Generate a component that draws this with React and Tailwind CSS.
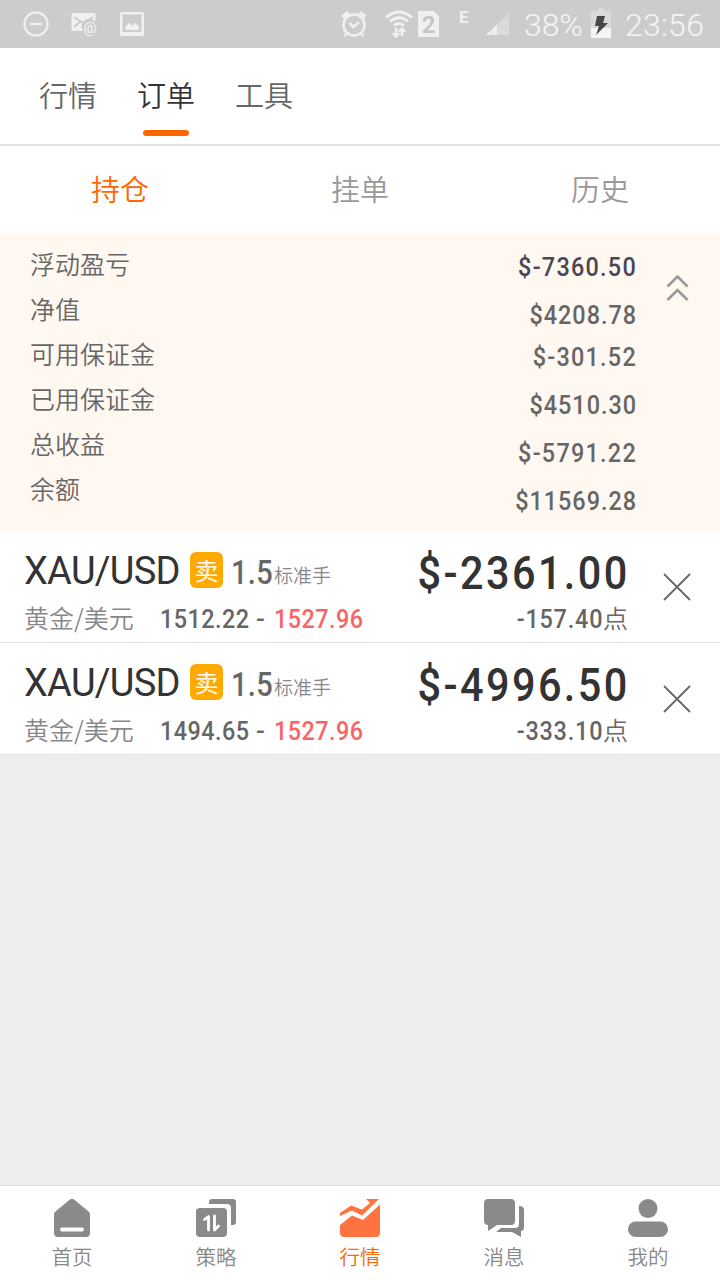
import clsx from 'clsx'

const summary = [
  { label: '浮动盈亏', value: '$-7360.50', cls: 'text-[#4a4755] tracking-[1.4px]' },
  { label: '净值', value: '$4208.78' },
  { label: '可用保证金', value: '$-301.52', cls: '-mt-1.5 tracking-[1.4px]' },
  { label: '已用保证金', value: '$4510.30' },
  { label: '总收益', value: '$-5791.22', cls: 'tracking-[1.4px]' },
  { label: '余额', value: '$11569.28' },
]

const orders = [
  { open: '1512.22', now: '1527.96', profit: '$-2361.00', points: '-157.40' },
  { open: '1494.65', now: '1527.96', profit: '$-4996.50', points: '-333.10' },
]

function StatusBar() {
  return (
    <header className="flex h-12 shrink-0 items-center bg-[#cccccc] text-[#f0f0f0]">
      <svg className="ml-[22px] h-7 w-7" viewBox="0 0 28 28" fill="none" stroke="currentColor" strokeWidth="2.200">
        <circle cx="14" cy="14" r="11.6" />
        <path d="M8 14h12" />
      </svg>
      <svg className="ml-5 h-7 w-7" viewBox="0 0 28 28">
        <path fill="currentColor" d="M3 3h21q1.500 0 1.500 1.500V12a7 7 0 0 0-12.500 9H3q-1.500 0-1.500-1.500v-15Q1.500 3 3 3z" />
        <path d="M4 7l9 6 10-6M4 17l6-5" fill="none" stroke="#cccccc" strokeWidth="2" />
        <text x="13.500" y="22.500" fontSize="14.500" fontFamily="Roboto" fontWeight="500" fill="currentColor">@</text>
      </svg>
      <svg className="ml-5 h-7 w-7" viewBox="0 0 28 28">
        <path fillRule="evenodd" fill="currentColor" d="M4 2h20q2 0 2 2v20q0 2-2 2H4q-2 0-2-2V4q0-2 2-2zM4.500 4.500V22h19V4.500z" />
        <path d="M7.500 20v-3l4-4.500 3 3.500 2.500-3.500 4 4.500v3z" fill="currentColor" />
      </svg>

      <svg className="ml-[194px] h-7 w-7" viewBox="0 0 28 28" fill="none" stroke="currentColor">
        <circle cx="14" cy="15" r="10.500" strokeWidth="2.500" />
        <path d="M2.500 7l6-4.500M25.500 7l-6-4.500" strokeWidth="4" />
        <path d="M9.500 13l4 4 5.500-5M7 23l-2.500 3M21 23l2.500 3" strokeWidth="2.500" />
      </svg>
      <svg className="ml-[17px] h-[30px] w-[30px]" viewBox="0 0 30 30" fill="none" stroke="currentColor" strokeWidth="2.800">
        <path d="M1 8.500Q14-2.500 27 8.500M5 12.500q9-7.500 18 0M9 16.500q5-4 10 0" />
        <path d="M11 19v6M17 27v-6" strokeWidth="2.600" />
        <path d="M6.500 24h9L11 29.500zM12.500 23h9L17 17.500z" fill="currentColor" stroke="none" />
      </svg>
      <svg className="ml-[3px] h-[26px] w-[21px]" viewBox="0 0 21 26">
        <path d="M0 0h16l5 5v21H0z" fill="currentColor" />
        <text x="10.500" y="22" textAnchor="middle" fontSize="24" fontWeight="600" fontFamily="Roboto" fill="#c4c4c4">2</text>
      </svg>
      <span className="mb-3.5 ml-5 w-[9px] font-[Roboto] text-[17px] leading-5 font-bold">E</span>
      <svg className="ml-[18px] h-[22px] w-[23px]" viewBox="0 0 23 22">
        <path d="M23 0v22H0z" fill="#dadada" />
        <path d="M5 17.200v4.800H0zM11 11.500V22H6v-5.700z" fill="currentColor" />
      </svg>
      <span className="ml-[15px] w-[61px] pt-px font-[Roboto] text-[32px] font-[350] tracking-[-0.1px] whitespace-nowrap text-[#f5f5f5]">38%</span>
      <svg className="mb-0.5 ml-[6px] h-[30px] w-5" viewBox="0 0 20 30">
        <path d="M7 0h6v3h7v17H0V3h7z" fill="#dadada" />
        <path d="M0 20h20v10H0z" fill="#f5f5f5" />
        <path d="M6 8h8l-2 7h5L5 27l3-9H4z" fill="#484848" />
      </svg>
      <span className="ml-[14px] pt-px font-[Roboto] text-[32px] font-[350] tracking-[0.3px] text-[#f5f5f5]">23:56</span>
    </header>
  )
}

function Order({ order }) {
  return (
    <div className="flex h-28 border-b border-[#e1e1e6] bg-white text-[#666666]">
      <div className="w-[380px] pl-6">
        <div className="flex h-[72px] items-center pt-1.5">
          <span className="w-[155px] pt-px font-[Roboto] text-[38px] leading-none tracking-[-0.7px] whitespace-nowrap text-[#333333]">XAU/USD</span>
          <span className="ml-[11px] flex h-9 w-[33px] items-center justify-center rounded-md bg-[#ffaa00] text-2xl leading-none text-white">卖</span>
          <span className="ml-2 w-[43px] origin-left scale-x-[0.88] pt-1 font-[Roboto] text-[33px] leading-none font-medium tracking-[0.4px]">1.5</span>
          <span className="pt-2 text-[19px] leading-none font-[350] text-[#888888]">标准手</span>
        </div>
        <div className="flex h-8 items-center whitespace-nowrap">
          <span className="w-[136px] pb-[3px] text-[25px] leading-none font-[350] text-[#888888]">黄金/美元</span>
          <span className="w-[96px] origin-left scale-x-90 font-[Roboto] text-[26px] leading-none font-medium tracking-[0.5px]">{order.open}</span>
          <span className="w-[18px] font-[Roboto] text-[26px] leading-none font-medium">-</span>
          <span className="origin-left scale-x-90 font-[Roboto] text-[26px] leading-none font-medium tracking-[0.5px] text-[#fb6464]">{order.now}</span>
        </div>
      </div>
      <div className="flex w-[248px] flex-col items-end">
        <div className="-mr-0.5 flex h-[72px] origin-right scale-x-90 items-center pt-3 font-[Roboto] text-[46px] leading-none font-medium tracking-[2.7px] text-[#333333]">{order.profit}</div>
        <div className="flex h-8 items-center">
          <span className="origin-right scale-x-90 font-[Roboto] text-[26px] leading-none font-medium tracking-[0.9px]">{order.points}</span>
          <span className="pb-[3px] text-[25px] leading-none font-[350]">点</span>
        </div>
      </div>
      <svg className="mt-[42px] ml-[35px] h-7 w-7" viewBox="0 0 28 28" stroke="#666666" strokeWidth="1.800">
        <path d="M1 1l26 26M27 1L1 27" />
      </svg>
    </div>
  )
}

const nav = [
  {
    label: '首页',
    icon: (
      <>
        <path d="M4 13L18 1.500q2-1.700 4 0L36 13q2 1.500 2 3v19q0 4-4 4H6q-4 0-4-4V16q0-1.500 2-3z" />
        <path d="M10 31.500h20" stroke="#fff" strokeWidth="4" strokeLinecap="round" />
      </>
    ),
  },
  {
    label: '策略',
    icon: (
      <>
        <path d="M13 6V4q0-3 3-3h21q3 0 3 3v20q0 3-3 3h-2V10q0-4-4-4z" />
        <rect y="10" width="31" height="29" rx="4" />
        <path d="M8.500 21.500l4-3V32M18.500 18v14l4-4" fill="none" stroke="#fff" strokeWidth="2.800" strokeLinejoin="round" strokeLinecap="round" />
      </>
    ),
  },
  {
    label: '行情',
    active: true,
    icon: (
      <>
        <path d="M0 27l12-9.500 11 4.500L40 6.500V35q0 4-4 4H4q-4 0-4-4z" />
        <path d="M0 18v-3L11 7.500l11 4L30 5l-4-4h13L22 17.500l-10-5z" />
      </>
    ),
  },
  {
    label: '消息',
    icon: (
      <>
        <path d="M4 1h23q4 0 4 4v18q0 4-4 4H13l-9 6v-6q-4 0-4-4V5q0-4 4-4z" />
        <path d="M35 8q5 0 5 4v17q0 4-3 4v6l-9-5H12l5-4h14q4 0 4-4z" />
      </>
    ),
  },
  {
    label: '我的',
    icon: (
      <>
        <circle cx="20" cy="10.500" r="9.500" />
        <rect y="23.500" width="40" height="15.500" rx="7.700" />
      </>
    ),
  },
]

export default function App() {
  return (
    <div className="flex h-[1280px] w-[720px] flex-col overflow-hidden bg-[#eeeeee] font-['Noto_Sans_CJK_SC',sans-serif]">
      <StatusBar />

      <nav className="flex h-[98px] shrink-0 gap-10 border-b-2 border-[#e1e1e4] bg-white pl-[39px] text-[29px] leading-none font-[350] text-[#666666]">
        <span className="pt-8">行情</span>
        <span className="flex flex-col items-center pt-8 text-[#333333]">
          订单
          <i className="mt-[21px] h-1.5 w-[46px] rounded-full bg-[#ff6600]" />
        </span>
        <span className="pt-8">工具</span>
      </nav>

      <div className="grid h-[88px] shrink-0 grid-cols-3 items-center bg-white pb-[3px] text-center text-[29px] leading-none font-[350] text-[#999999]">
        <span className="text-[#ff6600]">持仓</span>
        <span>挂单</span>
        <span>历史</span>
      </div>

      <section className="flex h-[297px] shrink-0 bg-[#fff8f1] text-[#666666]">
        <div className="w-[400px] pt-[7px] pl-[30px] text-[25px] font-[350]">
          {summary.map((s) => (
            <div key={s.label} className="h-[45px] leading-[45px]">{s.label}</div>
          ))}
        </div>
        <div className="w-[237px] origin-right scale-x-90 pt-[9px] text-right font-[Roboto] text-[26px] font-medium tracking-[1.1px]">
          {summary.map((s) => (
            <div key={s.label} className={clsx('h-12 leading-[48px]', s.cls)}>{s.value}</div>
          ))}
        </div>
        <svg className="mt-10 ml-[29px] h-7 w-[23px]" viewBox="0 0 23 28" fill="none" stroke="#999999" strokeWidth="2.600">
          <path d="M1.500 12.500l10-10 10 10M1.500 26l10-10 10 10" />
        </svg>
      </section>

      {orders.map((o) => (
        <Order key={o.open} order={o} />
      ))}

      <footer className="mt-auto grid h-[95px] grid-cols-5 border-t border-[#e0e0e0] bg-white text-[#888a8c]">
        {nav.map((n) => (
          <div key={n.label} className={clsx('flex flex-col items-center pt-3', n.active && 'text-[#ff7340]')}>
            <svg className="h-10 w-10" viewBox="0 0 40 40" fill="currentColor">{n.icon}</svg>
            <span className={clsx('mt-1.5 text-[20.5px] leading-6 font-[350]', n.active ? 'text-[#ff6600]' : 'text-[#888888]')}>{n.label}</span>
          </div>
        ))}
      </footer>
    </div>
  )
}
